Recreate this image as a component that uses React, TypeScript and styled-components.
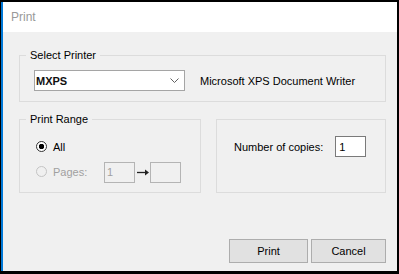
import React, { useState } from 'react';
import styled, { createGlobalStyle } from 'styled-components';

const GlobalStyle = createGlobalStyle`
    html, body {
        margin: 0;
        padding: 0;
        background: #ffffff;
    }
    body {
        font-family: "Liberation Sans", Arial, sans-serif;
        font-size: 11px;
        color: #000;
    }
`;

export default function App() {
    const [copies, setCopies] = useState('1');
    const [range, setRange] = useState<'all' | 'pages'>('all');

    return (
        <>
            <GlobalStyle />
            <Frame>
                <Window>
                    <TitleBar>Print</TitleBar>
                    <Body>
                        <Group>
                            <Legend>Select Printer</Legend>
                            <PrinterRow>
                                <SelectBox>
                                    <SelectValue>MXPS</SelectValue>
                                    <svg width="9" height="6" viewBox="0 0 9 6">
                                        <polyline
                                            points="0.5,0.5 4.5,4.5 8.5,0.5"
                                            fill="none"
                                            stroke="#606060"
                                            strokeWidth="1"
                                        />
                                    </svg>
                                </SelectBox>
                                <PrinterName>Microsoft XPS Document Writer</PrinterName>
                            </PrinterRow>
                        </Group>

                        <Columns>
                            <Group>
                                <Legend>Print Range</Legend>
                                <RangeList>
                                    <RadioRow onClick={() => setRange('all')}>
                                        <Radio $checked={range === 'all'} />
                                        <RadioLabel>All</RadioLabel>
                                    </RadioRow>
                                    <RadioRow $disabled>
                                        <Radio $disabled />
                                        <RadioLabel $disabled>Pages:</RadioLabel>
                                        <PageBox>1</PageBox>
                                        <Arrow width="15" height="7" viewBox="0 0 15 7">
                                            <line x1="2" y1="3.5" x2="11" y2="3.5" stroke="#222" strokeWidth="1.3" />
                                            <polygon points="10,0.5 14,3.5 10,6.5" fill="#222" />
                                        </Arrow>
                                        <PageBox />
                                    </RadioRow>
                                </RangeList>
                            </Group>

                            <Group $offset>
                                <CopiesRow>
                                    <span>Number of copies:</span>
                                    <CopiesInput
                                        value={copies}
                                        onChange={(e) => setCopies(e.target.value)}
                                    />
                                </CopiesRow>
                            </Group>
                        </Columns>

                        <Footer>
                            <DialogButton $width={79}>Print</DialogButton>
                            <DialogButton $width={75}>Cancel</DialogButton>
                        </Footer>
                    </Body>
                </Window>
            </Frame>
        </>
    );
}

const Frame = styled.div`
    width: 399px;
    height: 274px;
    box-sizing: border-box;
    border-top: 2px solid #000;
    border-right: 2px solid #000;
    border-bottom: 3px solid #000;
    border-left: 1px solid #000;
`;

const Window = styled.div`
    height: 100%;
    box-sizing: border-box;
    border-left: 2px solid #0078d7;
    display: flex;
    flex-direction: column;
`;

const TitleBar = styled.div`
    height: 30px;
    flex: none;
    background: #ffffff;
    display: flex;
    align-items: center;
    padding-left: 8px;
    font-size: 12px;
    color: #999999;
`;

const Body = styled.div`
    flex: 1;
    background: #f0f0f0;
    padding: 16px 11px 8px 16px;
    display: flex;
    flex-direction: column;
    gap: 10px;
`;

const Group = styled.fieldset<{ $offset?: boolean }>`
    margin: ${(p) => (p.$offset ? '7px 0 0' : '0')};
    padding: 0;
    border: 1px solid #dcdcdc;
    min-width: 0;
`;

const Legend = styled.legend`
    margin-left: 6px;
    padding: 0 4px;
    line-height: 14px;
    font-size: 11px;
`;

const PrinterRow = styled.div`
    display: flex;
    align-items: center;
    padding: 8px 0 10px 14px;
`;

const SelectBox = styled.div`
    width: 151px;
    height: 21px;
    box-sizing: border-box;
    background: #ffffff;
    border: 1px solid #a5a5a5;
    display: flex;
    align-items: center;
    justify-content: space-between;
    padding: 0 5px 0 1px;
`;

const SelectValue = styled.span`
    font-weight: bold;
    color: #111;
`;

const PrinterName = styled.span`
    margin-left: 15px;
`;

const Columns = styled.div`
    display: grid;
    grid-template-columns: 182px 170px;
    justify-content: space-between;
    align-items: stretch;
`;

const RangeList = styled.div`
    display: flex;
    flex-direction: column;
    gap: 4px;
    padding: 10px 0 10px 16px;
`;

const RadioRow = styled.div<{ $disabled?: boolean }>`
    height: 21px;
    display: flex;
    align-items: center;
    cursor: ${(p) => (p.$disabled ? 'default' : 'pointer')};
`;

const Radio = styled.span<{ $checked?: boolean; $disabled?: boolean }>`
    width: 11px;
    height: 11px;
    box-sizing: border-box;
    border-radius: 50%;
    border: 1px solid ${(p) => (p.$disabled ? '#c4c4c4' : '#333333')};
    background: ${(p) =>
        p.$checked
            ? 'radial-gradient(circle, #000 0 2.5px, #fff 3px)'
            : p.$disabled
            ? '#f0f0f0'
            : '#fff'};
    flex: none;
`;

const RadioLabel = styled.span<{ $disabled?: boolean }>`
    margin-left: 6px;
    color: ${(p) => (p.$disabled ? '#a0a0a0' : '#000')};
    width: ${(p) => (p.$disabled ? '51px' : 'auto')};
`;

const PageBox = styled.div`
    width: 31px;
    height: 21px;
    box-sizing: border-box;
    border: 1px solid #b4b4b4;
    background: #f0f0f0;
    color: #a0a0a0;
    padding: 3px 0 0 2px;
    margin-top: 2px;
`;

const Arrow = styled.svg`
    flex: none;
    margin-top: 1px;
`;

const CopiesRow = styled.div`
    display: flex;
    align-items: center;
    gap: 12px;
    padding: 16px 0 0 17px;
`;

const CopiesInput = styled.input`
    width: 31px;
    height: 21px;
    box-sizing: border-box;
    border: 1px solid #7a7a7a;
    background: #ffffff;
    font-family: "Liberation Sans", Arial, sans-serif;
    font-size: 11px;
    padding: 0 3px;
    outline: none;
`;

const Footer = styled.div`
    margin-top: auto;
    display: flex;
    justify-content: flex-end;
    gap: 3px;
`;

const DialogButton = styled.button<{ $width: number }>`
    width: ${(p) => p.$width}px;
    height: 24px;
    box-sizing: border-box;
    background: #e1e1e1;
    border: 1px solid #adadad;
    font-family: "Liberation Sans", Arial, sans-serif;
    font-size: 11px;
    color: #000;
    padding: 0;
`;
